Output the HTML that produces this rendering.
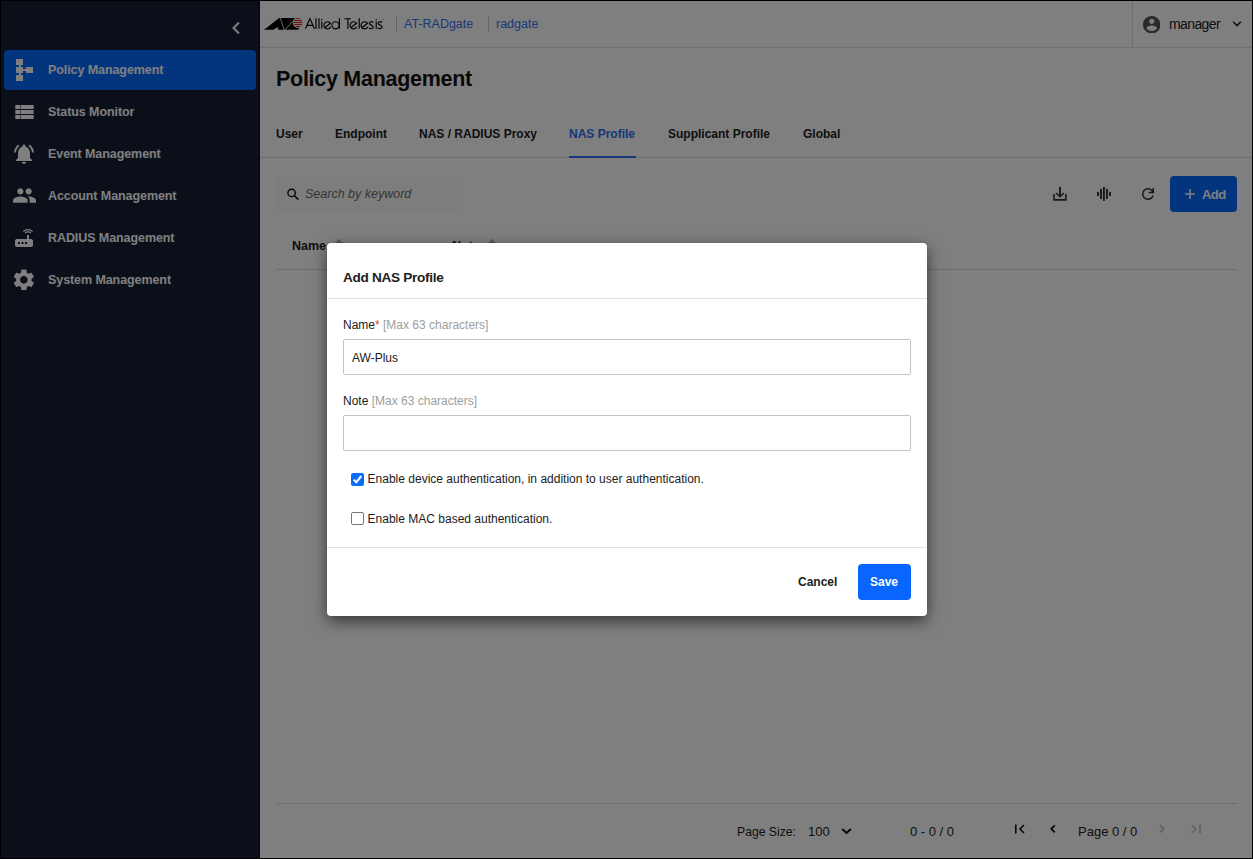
<!DOCTYPE html>
<html><head><meta charset="utf-8">
<style>
*{box-sizing:border-box;margin:0;padding:0}
html,body{width:1253px;height:859px;overflow:hidden;background:#000}
body{font-family:"Liberation Sans",sans-serif;position:relative}
.a{position:absolute;white-space:nowrap}
#frame{position:absolute;left:1px;top:1px;width:1251px;height:857px;background:#fff;overflow:hidden}
#side{position:absolute;left:0;top:0;width:259px;height:857px;background:#141e34;border-right:1px solid #060b18}
.nav{position:absolute;left:3px;width:252px;height:40px;border-radius:4px}
.nav.act{background:#066afe}
.nt{position:absolute;left:47px;font-size:12.5px;font-weight:bold;color:#fff;line-height:15px;letter-spacing:-0.08px;white-space:nowrap}
#main{position:absolute;left:259px;top:0;width:992px;height:857px;background:#fff}
.blue{color:#3370f0}
.tab.blue{color:#2a6ef2}
.tab{position:absolute;top:126px;font-size:12px;font-weight:bold;color:#212121;line-height:14px;white-space:nowrap}
#overlay{position:absolute;left:0;top:0;width:1251px;height:857px;background:rgba(0,0,0,.5)}
#modal{position:absolute;left:326px;top:242px;width:600px;height:373px;background:#fff;border-radius:4px;
 box-shadow:0 5px 15px rgba(0,0,0,.58)}
.lbl{position:absolute;font-size:12px;color:#212121;line-height:14px}
.hint{color:#9e9e9e}
.inp{position:absolute;left:16px;width:568px;height:36px;border:1px solid #c4c4c4;border-radius:2px}
</style></head><body>
<div id="frame">
 <div id="side">
  <svg class="a" style="left:229px;top:19px" width="12" height="16" viewBox="0 0 12 16"><path d="M9 2.5 L3.5 8 L9 13.5" fill="none" stroke="#fff" stroke-width="2"/></svg>
  <div class="nav act" style="top:49px"></div>
  <!-- policy icon -->
  <svg class="a" style="left:14px;top:57px" width="22" height="24" viewBox="0 0 22 24" fill="#fff">
   <rect x="1" y="1" width="7" height="6"/><rect x="4" y="7" width="2" height="2"/>
   <rect x="1" y="9" width="7" height="6"/><rect x="8" y="11" width="3" height="2"/>
   <rect x="11" y="9" width="7" height="6"/><rect x="4" y="15" width="2" height="2"/>
   <rect x="1" y="17" width="7" height="6"/>
  </svg>
  <div class="nt" style="top:62px">Policy Management</div>
  <!-- list icon -->
  <svg class="a" style="left:13px;top:103px" width="22" height="18" viewBox="0 0 22 18" fill="#fff">
   <rect x="1.3" y="1" width="5" height="4"/><rect x="6.8" y="1" width="12.8" height="4"/>
   <rect x="1.3" y="6" width="5" height="4"/><rect x="6.8" y="6" width="12.8" height="4"/>
   <rect x="1.3" y="11" width="5" height="4"/><rect x="6.8" y="11" width="12.8" height="4"/>
  </svg>
  <div class="nt" style="top:104px">Status Monitor</div>
  <!-- bell -->
  <svg class="a" style="left:10.8px;top:140.5px" width="24" height="24" viewBox="0 0 24 24" fill="#fff"><path d="M7.58 4.08L6.15 2.65C3.75 4.48 2.17 7.3 2.03 10.5h2c.15-2.65 1.51-4.97 3.55-6.42zm12.39 6.42h2c-.15-3.2-1.73-6.02-4.12-7.85l-1.42 1.43c2.02 1.45 3.39 3.77 3.54 6.42zM18 11c0-3.07-1.64-5.64-4.5-6.32V4c0-.83-.67-1.5-1.5-1.5s-1.5.67-1.5 1.5v.68C7.63 5.36 6 7.92 6 11v5l-2 2v1h16v-1l-2-2v-5zm-6 11c.14 0 .27-.01.4-.04.65-.14 1.18-.58 1.44-1.18.1-.24.15-.5.15-.78h-4c.01 1.1.9 2 2.01 2z"/></svg>
  <div class="nt" style="top:146px">Event Management</div>
  <!-- people -->
  <svg class="a" style="left:10.9px;top:182.2px" width="25" height="25" viewBox="0 0 24 24" fill="#fff"><path d="M16 11c1.66 0 2.99-1.34 2.99-3S17.66 5 16 5c-1.66 0-3 1.34-3 3s1.34 3 3 3zm-8 0c1.66 0 2.99-1.34 2.99-3S9.66 5 8 5C6.34 5 5 6.34 5 8s1.34 3 3 3zm0 2c-2.33 0-7 1.17-7 3.5V19h14v-2.5c0-2.33-4.67-3.5-7-3.5zm8 0c-.29 0-.62.02-.97.05 1.16.84 1.97 1.97 1.97 3.45V19h6v-2.5c0-2.33-4.67-3.5-7-3.5z"/></svg>
  <div class="nt" style="top:188px">Account Management</div>
  <!-- router -->
  <svg class="a" style="left:11.4px;top:224.8px" width="24" height="24" viewBox="0 0 24 24" fill="#fff"><path d="M20.2 5.9l.8-.8C19.6 3.7 17.8 3 16 3s-3.6.7-5 2.1l.8.8C13 4.8 14.5 4.2 16 4.2s3 .6 4.2 1.7zm-.9.8c-.9-.9-2.1-1.4-3.3-1.4s-2.4.5-3.3 1.4l.8.8c.7-.7 1.6-1 2.5-1 .9 0 1.8.3 2.5 1l.8-.8zM19 13h-2V9h-2v4H5c-1.1 0-2 .9-2 2v4c0 1.1.9 2 2 2h14c1.1 0 2-.9 2-2v-4c0-1.1-.9-2-2-2zM8 18H6v-2h2v2zm3.5 0h-2v-2h2v2zm3.5 0h-2v-2h2v2z"/></svg>
  <div class="nt" style="top:230px">RADIUS Management</div>
  <!-- gear -->
  <svg class="a" style="left:10.4px;top:266.1px" width="25.7" height="25.7" viewBox="0 0 24 24" fill="#fff"><path d="M19.14 12.94c.04-.3.06-.61.06-.94 0-.32-.02-.64-.07-.94l2.03-1.58c.18-.14.23-.41.12-.61l-1.92-3.32c-.12-.22-.37-.29-.59-.22l-2.39.96c-.5-.38-1.03-.7-1.62-.94l-.36-2.54c-.04-.24-.24-.41-.48-.41h-3.84c-.24 0-.43.17-.47.41l-.36 2.54c-.59.24-1.13.57-1.62.94l-2.39-.96c-.22-.08-.47 0-.59.22L2.74 8.87c-.12.21-.08.47.12.61l2.03 1.58c-.05.3-.09.63-.09.94s.02.64.07.94l-2.03 1.58c-.18.14-.23.41-.12.61l1.92 3.32c.12.22.37.29.59.22l2.39-.96c.5.38 1.03.7 1.62.94l.36 2.54c.05.24.24.41.48.41h3.84c.24 0 .44-.17.47-.41l.36-2.54c.59-.24 1.13-.56 1.62-.94l2.39.96c.22.08.47 0 .59-.22l1.92-3.32c.12-.22.07-.47-.12-.61l-2.01-1.58zM12 15.6c-1.98 0-3.6-1.62-3.6-3.6s1.62-3.6 3.6-3.6 3.6 1.62 3.6 3.6-1.62 3.6-3.6 3.6z"/></svg>
  <div class="nt" style="top:272px">System Management</div>
 </div>

 <div id="main">
  <div class="a" style="left:0;top:46px;width:992px;height:1px;background:#e0e0e0"></div>
  <div class="a" style="left:872px;top:0;width:1px;height:46px;background:#e0e0e0"></div>
  <div class="a" style="left:0;top:156px;width:992px;height:1px;background:#dcdcdc"></div>
 </div>
 <!-- header -->
 <svg class="a" style="left:261px;top:11px" width="45" height="24" viewBox="262 12 45 24">
  <defs><clipPath id="cc"><circle cx="298" cy="22.6" r="4.6"/></clipPath></defs>
  <path d="M264 29.8 L279.2 18.1 L297 18.1 L302 22 L298.2 29.8 Z" fill="#000"/>
  <path d="M273.4 30 L276.7 27.6 L278.1 27.6 L278.1 30 Z" fill="#fff"/>
  <path d="M280.3 18 L284.2 30" stroke="#fff" stroke-width="0.8"/>
  <path d="M292.5 21.6 L284.8 30" stroke="#fff" stroke-width="0.9"/>
  <circle cx="298" cy="22.6" r="5.3" fill="#fff"/>
  <g clip-path="url(#cc)" fill="#d42a1e"><rect x="292" y="18.1" width="12" height="1"/><rect x="292" y="20" width="12" height="1.1"/><rect x="292" y="22" width="12" height="1.1"/><rect x="292" y="24" width="12" height="1.1"/><rect x="292" y="26" width="12" height="1.1"/></g>
 </svg>
 <svg class="a" style="left:302px;top:13px" width="84" height="18" viewBox="303 14 84 18"><path d="M305.4 28.8 L309.95 18.6 L314.5 28.8 M307.3 25.4 L312.6 25.4 M316 18.2 V28.8 M319 18.2 V28.8 M321.8 21.4 V28.8 M330.72 26.80 A3.55 3.55 0 1 1 330.41 23.26 L325.30 27.25 M335.5 25.3 m-3.55 0 a3.55 3.55 0 1 0 7.1 0 a3.55 3.55 0 1 0 -7.1 0 M339.45 18.2 V28.8 M344.5 18.7 H351 M347.9 18.7 V28.8 M356.82 26.80 A3.55 3.55 0 1 1 356.51 23.26 L351.40 27.25 M359.2 18.2 V28.8 M367.82 26.80 A3.55 3.55 0 1 1 367.51 23.26 L362.40 27.25 M373.10 22.40 C372.60 21.30 369.20 21.40 369.40 23.10 C369.60 25.40 373.20 25.10 373.20 27.00 C373.20 29.00 369.40 29.00 369.00 27.60 M376.2 21.4 V28.8 M382.00 22.40 C381.50 21.30 378.00 21.40 378.20 23.10 C378.40 25.40 382.10 25.10 382.10 27.00 C382.10 29.00 378.20 29.00 377.80 27.60" fill="none" stroke="#000" stroke-width="1.15"/><rect x="321.2" y="19.0" width="1.2" height="1.2" fill="#000"/><rect x="375.6" y="19.0" width="1.2" height="1.2" fill="#000"/><circle cx="383.3" cy="18.9" r="0.5" fill="#555"/></svg>
 <div class="a" style="left:395px;top:15px;width:1px;height:16px;background:#cfcfcf"></div>
 <div class="a blue m" style="left:403px;top:16px;font-size:12.5px;line-height:15px">AT-RADgate</div>
 <div class="a" style="left:487px;top:15px;width:1px;height:16px;background:#cfcfcf"></div>
 <div class="a blue m" style="left:495px;top:16px;font-size:12.5px;line-height:15px">radgate</div>
 <svg class="a" style="left:1141.6px;top:14.6px" width="17.5" height="17.5" viewBox="2 2 20 20"><path fill="#555" d="M12 2C6.48 2 2 6.48 2 12s4.48 10 10 10 10-4.48 10-10S17.52 2 12 2zm0 3c1.66 0 3 1.34 3 3s-1.34 3-3 3-3-1.34-3-3 1.34-3 3-3zm0 14.2c-2.5 0-4.71-1.28-6-3.22.03-1.99 4-3.08 6-3.08 1.99 0 5.97 1.09 6 3.08-1.29 1.94-3.5 3.22-6 3.22z"/></svg>
 <div class="a m" style="left:1168px;top:15px;font-size:14px;line-height:17px;letter-spacing:-0.6px;color:#212121">manager</div>
 <svg class="a" style="left:1230px;top:18px" width="12" height="10" viewBox="0 0 12 10"><path d="M2.2 2.8 L6 6.6 L9.8 2.8" fill="none" stroke="#212121" stroke-width="1.5"/></svg>
 <!-- title -->
 <div class="a m" style="left:275px;top:66px;font-size:21.5px;line-height:25px;font-weight:bold;letter-spacing:-0.28px;color:#111">Policy Management</div>
 <div class="tab m" style="left:275px">User</div>
 <div class="tab m" style="left:334px">Endpoint</div>
 <div class="tab m" style="left:418px">NAS / RADIUS Proxy</div>
 <div class="tab m blue" style="left:568px">NAS Profile</div>
 <div class="tab m" style="left:667px">Supplicant Profile</div>
 <div class="tab m" style="left:802px">Global</div>
 <div class="a" style="left:568px;top:155px;width:67px;height:2px;background:#2a6ef2"></div>


 <!-- search -->
 <div class="a" style="left:275px;top:175px;width:181px;height:36px;background:#fbfbfb;border-radius:3px"></div>
 <svg class="a" style="left:284px;top:184.6px" width="16" height="16" viewBox="0 0 16 16"><circle cx="6.6" cy="6.9" r="3.7" fill="none" stroke="#111" stroke-width="1.4"/><path d="M9.2 9.5 L13.4 13.6" stroke="#111" stroke-width="1.5"/></svg>
 <div class="a m" style="left:304px;top:185.6px;font-size:12.5px;line-height:14px;font-style:italic;color:#6b6b6b">Search by keyword</div>
 <!-- toolbar icons -->
 <svg class="a" style="left:1047px;top:181px" width="24" height="24" viewBox="1048 182 24 24" fill="#303030"><path d="M1053.2 194 V200.8 H1066.7 V194 H1065.1 V199 H1054.8 V194 Z"/><rect x="1059" y="186.9" width="1.9" height="8.6"/><path d="M1056 193 L1059.95 196.8 L1063.9 193" fill="none" stroke="#303030" stroke-width="1.5"/></svg>
 <svg class="a" style="left:1091px;top:181px" width="24" height="24" viewBox="1092 182 24 24" fill="#303030"><rect x="1097" y="191.9" width="1.9" height="4.1"/><rect x="1100" y="188.8" width="1.9" height="10.1"/><rect x="1102.95" y="186.9" width="1.9" height="14"/><rect x="1106" y="188.8" width="1.9" height="10.1"/><rect x="1109.05" y="191.9" width="1.9" height="4.1"/></svg>
 <svg class="a" style="left:1138px;top:184px" width="18" height="18" viewBox="0 -960 960 960"><path fill="#303030" d="M480-160q-134 0-227-93t-93-227q0-134 93-227t227-93q69 0 132 28.5T720-690v-110h80v280H520v-80h168q-32-56-87.5-88T480-720q-100 0-170 70t-70 170q0 100 70 170t170 70q77 0 139-44t87-116h84q-28 106-114 173t-196 67Z"/></svg>
 <div class="a" style="left:1169px;top:175px;width:67px;height:36px;background:#066afe;border-radius:4px"></div>
 <svg class="a" style="left:1183px;top:187px" width="12" height="12" viewBox="0 0 12 12"><path d="M6 1 V11 M1 6 H11" stroke="#fff" stroke-width="1.6"/></svg>
 <div class="a m" style="left:1201px;top:186px;font-size:13px;line-height:15px;font-weight:bold;letter-spacing:-0.6px;color:#fff">Add</div>
 <!-- table header -->
 <div class="a m" style="left:291px;top:238px;font-size:12.5px;line-height:14px;font-weight:bold;color:#212121">Name</div>
 <svg class="a" style="left:331.5px;top:236px" width="12" height="16" viewBox="0 0 12 16" fill="#b4b4b4"><path d="M2 6 L6 2 L10 6Z M2 10 L6 14 L10 10Z"/></svg>
 <div class="a m" style="left:451px;top:238px;font-size:12.5px;line-height:14px;font-weight:bold;color:#212121">Note</div>
 <svg class="a" style="left:485px;top:236px" width="12" height="16" viewBox="0 0 12 16" fill="#b4b4b4"><path d="M2 6 L6 2 L10 6Z M2 10 L6 14 L10 10Z"/></svg>
 <div class="a" style="left:275px;top:268px;width:961px;height:1px;background:#dcdcdc"></div>
 <!-- footer -->
 <div class="a" style="left:275px;top:802px;width:961px;height:1px;background:#dcdcdc"></div>
 <div class="a m" style="left:736px;top:824px;font-size:12.2px;line-height:14px;color:#212121">Page Size:</div>
 <div class="a m" style="left:807px;top:824px;font-size:13px;line-height:14px;color:#212121">100</div>
 <svg class="a" style="left:838px;top:824px" width="14" height="12" viewBox="0 0 14 12"><path d="M3.2 4 L7.55 8 L11.9 4" fill="none" stroke="#111" stroke-width="2"/></svg>
 <div class="a m" style="left:909px;top:824px;font-size:13px;line-height:14px;color:#212121">0 - 0 / 0</div>
 <svg class="a" style="left:1009.5px;top:819px" width="18" height="18" viewBox="0 0 18 18"><path d="M4.8 4.5 V13.5" stroke="#111" stroke-width="1.6"/><path d="M13 5 L9 9 L13 13" fill="none" stroke="#111" stroke-width="1.6"/></svg>
 <svg class="a" style="left:1043px;top:818.8px" width="18" height="18" viewBox="0 0 18 18"><path d="M10.8 5.3 L7.3 8.8 L10.8 12.3" fill="none" stroke="#111" stroke-width="1.8"/></svg>
 <div class="a m" style="left:1077px;top:824px;font-size:13px;line-height:14px;color:#212121">Page 0 / 0</div>
 <svg class="a" style="left:1152px;top:819px" width="18" height="18" viewBox="0 0 18 18"><path d="M7.2 5.3 L10.7 8.8 L7.2 12.3" fill="none" stroke="#bdbdbd" stroke-width="1.8"/></svg>
 <svg class="a" style="left:1186px;top:819px" width="18" height="18" viewBox="0 0 18 18"><path d="M4.8 5 L8.8 9 L4.8 13" fill="none" stroke="#bdbdbd" stroke-width="1.6"/><path d="M13 4.5 V13.5" stroke="#bdbdbd" stroke-width="1.6"/></svg>
 <div id="overlay"></div>
 <div id="modal">
  <div class="a m" style="left:16px;top:27px;font-size:13.6px;line-height:16px;font-weight:bold;letter-spacing:-0.3px;color:#212121">Add NAS Profile</div>
  <div class="a" style="left:0;top:55px;width:600px;height:1px;background:#e0e0e0"></div>
  <div class="lbl m" style="left:16px;top:75px">Name<span style="color:#e53935">*</span> <span class="hint">[Max 63 characters]</span></div>
  <div class="inp" style="top:96px"></div>
  <div class="lbl m" style="left:25px;top:108px">AW-Plus</div>
  <div class="lbl m" style="left:16px;top:151px">Note <span class="hint">[Max 63 characters]</span></div>
  <div class="inp" style="top:172px"></div>
  <div class="a" style="left:24px;top:230px;width:13px;height:13px;border-radius:2px;background:#0a6cff"></div>
  <svg class="a" style="left:24px;top:230px" width="13" height="13" viewBox="0 0 13 13"><path d="M2.7 6.7 L5.3 9.2 L10.3 3.0" fill="none" stroke="#fff" stroke-width="2"/></svg>
  <div class="lbl m" style="left:40.6px;top:229px">Enable device authentication, in addition to user authentication.</div>
  <div class="a" style="left:24px;top:269px;width:13px;height:13px;border-radius:2px;border:1px solid #767676;background:#fff"></div>
  <div class="lbl m" style="left:40.6px;top:269px">Enable MAC based authentication.</div>
  <div class="a" style="left:0;top:304px;width:600px;height:1px;background:#e0e0e0"></div>
  <div class="a m" style="left:471px;top:332px;font-size:12px;line-height:14px;font-weight:bold;color:#212121">Cancel</div>
  <div class="a" style="left:531px;top:321px;width:53px;height:36px;border-radius:4px;background:#0866ff"></div>
  <div class="a m" style="left:543px;top:332px;font-size:12px;line-height:14px;font-weight:bold;color:#fff">Save</div>
 </div>
</div>
</body></html>
